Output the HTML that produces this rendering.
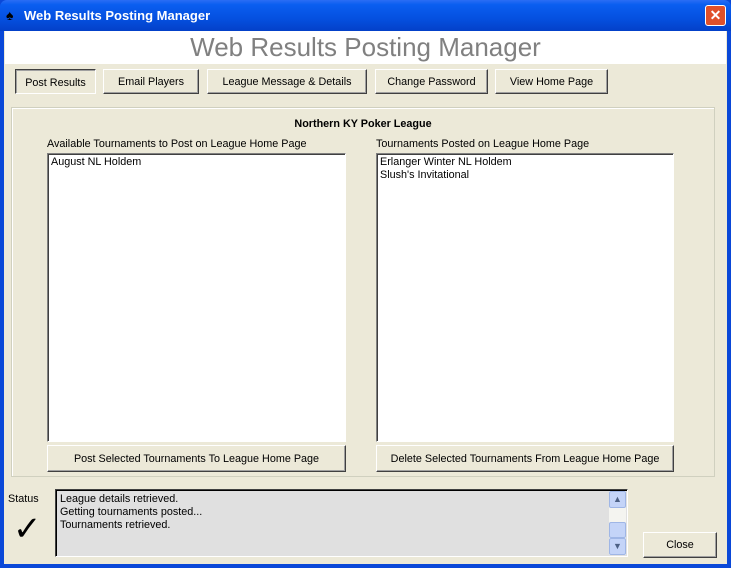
<!DOCTYPE html>
<html><head><style>
*{margin:0;padding:0;box-sizing:border-box}
body{width:731px;height:568px;overflow:hidden;font-family:"Liberation Sans",sans-serif;font-size:10.8px;position:relative;background:#0a48d8}
.abs{position:absolute}
#title{left:0;top:0;width:731px;height:31px;background:linear-gradient(#2a6df5 0%,#0a5ef0 15%,#0550e0 60%,#0340c8 100%);border-radius:7px 7px 0 0}
#client{left:4px;top:31px;width:723px;height:533px;background:#ECE9D8}
#hdr{left:5px;top:31px;width:721px;height:33px;background:#fff;text-align:center;font-size:26px;color:#808080;line-height:33px;letter-spacing:0}
.btn{position:absolute;background:#ECE9D8;border:1px solid;border-color:#fff #404040 #404040 #fff;box-shadow:inset -1px -1px 0 #a0a0a0;text-align:center;color:#000}
.list{position:absolute;background:#fff;border:1px solid;border-color:#808080 #fff #fff #808080;box-shadow:inset 1px 1px 0 #404040;padding:2px 3px;line-height:13px}
</style></head><body>
<div id="title" class="abs"></div>
<div class="abs" style="left:6px;top:7px;font-size:14px;color:#000">♠</div>
<div class="abs" style="left:24px;top:8px;color:#fff;font-weight:bold;font-size:13px">Web Results Posting Manager</div>
<div class="abs" style="left:705px;top:5px;width:21px;height:21px;border:1px solid #fff;border-radius:3px;background:#e0502a;color:#fff;font-weight:bold;text-align:center;line-height:19px;font-size:14px">✕</div>
<div id="client" class="abs"></div>
<div id="hdr" class="abs">Web Results Posting Manager</div>
<div class="btn" style="left:15px;top:69px;width:81px;height:25px;line-height:26px;border-color:#404040 #fff #fff #404040;box-shadow:inset 1px 1px 0 #a0a0a0">Post Results</div>
<div class="btn" style="left:103px;top:69px;width:96px;height:25px;line-height:24px">Email Players</div>
<div class="btn" style="left:207px;top:69px;width:160px;height:25px;line-height:24px">League Message &amp; Details</div>
<div class="btn" style="left:375px;top:69px;width:113px;height:25px;line-height:24px">Change Password</div>
<div class="btn" style="left:495px;top:69px;width:113px;height:25px;line-height:24px">View Home Page</div>
<div class="abs" style="left:11px;top:107px;width:704px;height:370px;border:1px solid #d0d0bf;box-shadow:1px 1px 0 #fff inset"></div>
<div class="abs" style="left:11px;top:118px;width:704px;text-align:center;font-weight:bold">Northern KY Poker League</div>
<div class="abs" style="left:47px;top:138px">Available Tournaments to Post on League Home Page</div>
<div class="abs" style="left:376px;top:138px">Tournaments Posted on League Home Page</div>
<div class="list" style="left:47px;top:153px;width:299px;height:289px">August NL Holdem</div>
<div class="list" style="left:376px;top:153px;width:298px;height:289px">Erlanger Winter NL Holdem<br>Slush's Invitational</div>
<div class="btn" style="left:47px;top:445px;width:299px;height:27px;line-height:26px">Post Selected Tournaments To League Home Page</div>
<div class="btn" style="left:376px;top:445px;width:298px;height:27px;line-height:26px">Delete Selected Tournaments From League Home Page</div>
<div class="abs" style="left:8px;top:493px">Status</div>
<div class="abs" style="left:13px;top:509px;font-size:34px;line-height:40px">✓</div>
<div class="abs" style="left:55px;top:489px;width:573px;height:68px;background:#e0e0e0;border:1px solid;border-color:#404040 #fff #fff #404040;box-shadow:inset 1px 1px 0 #000;padding:3px 4px;line-height:13px">League details retrieved.<br>Getting tournaments posted...<br>Tournaments retrieved.</div>
<div class="abs" style="left:609px;top:491px;width:17px;height:64px;background:#f4f4f0"></div>
<div class="abs" style="left:609px;top:491px;width:17px;height:17px;background:#c4d4f8;border:1px solid #9fb6e6;border-radius:2px;color:#4d6185;font-size:9px;text-align:center;line-height:15px">▲</div>
<div class="abs" style="left:609px;top:522px;width:17px;height:16px;background:#c4d4f8;border:1px solid #9fb6e6;border-radius:2px"></div>
<div class="abs" style="left:609px;top:538px;width:17px;height:17px;background:#c4d4f8;border:1px solid #9fb6e6;border-radius:2px;color:#4d6185;font-size:9px;text-align:center;line-height:15px">▼</div>
<div class="btn" style="left:643px;top:532px;width:74px;height:26px;line-height:25px">Close</div>
</body></html>
